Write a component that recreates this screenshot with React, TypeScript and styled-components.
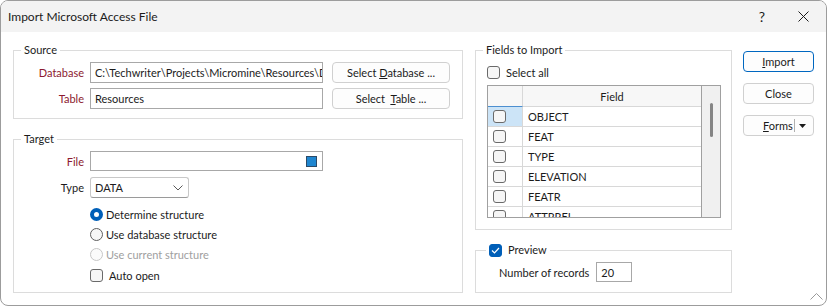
import React from 'react';
import styled, { createGlobalStyle } from 'styled-components';

const FONT = `Lato, "Liberation Sans", sans-serif`;

const fields = ['OBJECT', 'FEAT', 'TYPE', 'ELEVATION', 'FEATR', 'ATTRREL'];

const GlobalStyle = createGlobalStyle`
  html, body {
    margin: 0;
    padding: 0;
    background: #ffffff;
  }
  body {
    font-family: ${FONT};
    font-size: 11px;
    color: #1b1b1b;
  }
`;

function App() {
  return (
    <>
      <GlobalStyle />
      <Window>
        <TitleBar>
          <Title>Import Microsoft Access File</Title>
          <TitleActions>
            <HelpGlyph>?</HelpGlyph>
            <svg width="11" height="11" viewBox="0 0 11 11">
              <path d="M0.5 0.5 L10.5 10.5 M10.5 0.5 L0.5 10.5" stroke="#1b1b1b" strokeWidth="1" />
            </svg>
          </TitleActions>
        </TitleBar>

        <Body>
          <Column $width={450}>
            <Group>
              <Legend>Source</Legend>
              <Rows $gap={5} $bottom={9}>
                <FormRow>
                  <Label $required>Database</Label>
                  <TextBox $width={233}>C:\Techwriter\Projects\Micromine\Resources\Data</TextBox>
                  <Button $width={118}>
                    Select <u>D</u>atabase ...
                  </Button>
                </FormRow>
                <FormRow>
                  <Label $required>Table</Label>
                  <TextBox $width={233}>Resources</TextBox>
                  <Button $width={118}>
                    Select&nbsp; <u>T</u>able ...
                  </Button>
                </FormRow>
              </Rows>
            </Group>

            <Group $grow>
              <Legend>Target</Legend>
              <Rows $gap={6} $bottom={0}>
                <FormRow $height={20}>
                  <Label $required>File</Label>
                  <TextBox $width={233}>
                    <FileSwatch />
                  </TextBox>
                </FormRow>
                <FormRow>
                  <Label>Type</Label>
                  <Select>
                    DATA
                    <svg width="10" height="6" viewBox="0 0 10 6">
                      <path d="M0.5 0.5 L5 5 L9.5 0.5" fill="none" stroke="#5a5a5a" strokeWidth="1" />
                    </svg>
                  </Select>
                </FormRow>
                <OptionList>
                  <OptionRow>
                    <Radio $checked />
                    Determine structure
                  </OptionRow>
                  <OptionRow>
                    <Radio />
                    Use database structure
                  </OptionRow>
                  <OptionRow $disabled>
                    <Radio $disabled />
                    Use current structure
                  </OptionRow>
                  <OptionRow $gap={6} $top={1}>
                    <CheckBox />
                    Auto open
                  </OptionRow>
                </OptionList>
              </Rows>
            </Group>
          </Column>

          <Column $width={257}>
            <Group>
              <Legend>Fields to Import</Legend>
              <FieldsBody>
                <CheckRow>
                  <CheckBox />
                  Select all
                </CheckRow>
                <Grid>
                  <GridTable>
                    <GridHeader>
                      <HeaderCorner />
                      <HeaderCell>Field</HeaderCell>
                    </GridHeader>
                    {fields.map((name, i) => (
                      <GridRow key={name}>
                        <SelectCell $active={i === 0}>
                          <CheckBox />
                        </SelectCell>
                        <NameCell>{name}</NameCell>
                      </GridRow>
                    ))}
                  </GridTable>
                  <ScrollTrack>
                    <ScrollThumb />
                  </ScrollTrack>
                </Grid>
              </FieldsBody>
            </Group>

            <Group $grow>
              <Legend $offset={10}>
                <LegendCheck>
                  <CheckBox $checked>
                    <svg width="9" height="7" viewBox="0 0 9 7">
                      <path d="M1 3.5 L3.5 6 L8 1" fill="none" stroke="#ffffff" strokeWidth="1.2" />
                    </svg>
                  </CheckBox>
                  Preview
                </LegendCheck>
              </Legend>
              <PreviewRow>
                Number of records
                <TextBox $width={36} $height={20}>20</TextBox>
              </PreviewRow>
            </Group>
          </Column>

          <ButtonColumn>
            <Button $primary $height={21}>
              <u>I</u>mport
            </Button>
            <Button $height={21}>Close</Button>
            <SplitButton>
              <SplitLabel>
                <u>F</u>orms
              </SplitLabel>
              <SplitDivider />
              <svg width="7" height="4" viewBox="0 0 7 4">
                <path d="M0 0 L7 0 L3.5 4 Z" fill="#1b1b1b" />
              </svg>
            </SplitButton>
          </ButtonColumn>
        </Body>

        <SizeGrip>
          <svg width="13" height="8" viewBox="0 0 13 8">
            <path d="M0.5 7.5 L6.5 1.5 L12.5 7.5" fill="none" stroke="#9a9a9a" strokeWidth="1" />
          </svg>
        </SizeGrip>
      </Window>
    </>
  );
}

const Window = styled.div`
  position: relative;
  display: flex;
  flex-direction: column;
  box-sizing: border-box;
  width: 827px;
  height: 306px;
  border: 1px solid #9c9c9c;
  border-radius: 8px;
  overflow: hidden;
  background: #ffffff;
`;

const TitleBar = styled.div`
  display: flex;
  align-items: center;
  justify-content: space-between;
  height: 31px;
  padding: 0 17px 0 7px;
  background: #f3f3f3;
`;

const Title = styled.span`
  font-size: 12px;
`;

const TitleActions = styled.div`
  display: flex;
  align-items: center;
  gap: 33px;
`;

const HelpGlyph = styled.span`
  font-size: 14px;
`;

const Body = styled.div`
  display: flex;
  flex: 1;
  gap: 12px;
  padding: 10px 12px 12px 12px;
`;

const Column = styled.div<{ $width: number }>`
  display: flex;
  flex-direction: column;
  gap: 12px;
  width: ${(p) => p.$width}px;
  flex-shrink: 0;
`;

const Group = styled.fieldset<{ $grow?: boolean }>`
  flex: ${(p) => (p.$grow ? 1 : '0 0 auto')};
  box-sizing: border-box;
  min-width: 0;
  margin: 0;
  padding: 4px 0 0 0;
  border: 1px solid #dcdcdc;
`;

const Legend = styled.legend<{ $offset?: number }>`
  margin-left: ${(p) => p.$offset ?? 7}px;
  padding: 0 3px;
  line-height: 16px;
  height: 16px;
`;

const LegendCheck = styled.span`
  display: flex;
  align-items: center;
  gap: 6px;
  height: 16px;
`;

const Rows = styled.div<{ $gap: number; $bottom: number }>`
  display: flex;
  flex-direction: column;
  gap: ${(p) => p.$gap}px;
  padding-bottom: ${(p) => p.$bottom}px;
`;

const FormRow = styled.div<{ $height?: number }>`
  display: flex;
  align-items: center;
  gap: 6px;
  height: ${(p) => p.$height ?? 21}px;

  & > button {
    margin-left: 3px;
  }
`;

const Label = styled.span<{ $required?: boolean }>`
  width: 70px;
  text-align: right;
  color: ${(p) => (p.$required ? '#8c1a30' : '#1b1b1b')};
`;

const TextBox = styled.div<{ $width: number; $height?: number }>`
  position: relative;
  display: flex;
  align-items: center;
  box-sizing: border-box;
  width: ${(p) => p.$width}px;
  height: ${(p) => (p.$height ? `${p.$height}px` : '100%')};
  padding: 0 4px;
  border: 1px solid #a8a8a8;
  background: #ffffff;
  white-space: nowrap;
  overflow: hidden;
`;

const FileSwatch = styled.span`
  position: absolute;
  right: 5px;
  top: 4px;
  box-sizing: border-box;
  width: 11px;
  height: 11px;
  border: 1px solid #2b4a68;
  background: #1f86d0;
`;

const Select = styled.div`
  display: flex;
  align-items: center;
  justify-content: space-between;
  box-sizing: border-box;
  width: 99px;
  height: 21px;
  padding: 0 5px 0 4px;
  border: 1px solid #c8c8c8;
  border-bottom-color: #9a9a9a;
  border-radius: 3px;
  background: #ffffff;
`;

const OptionList = styled.div`
  display: flex;
  flex-direction: column;
  margin-left: 76px;
`;

const OptionRow = styled.div<{ $disabled?: boolean; $gap?: number; $top?: number }>`
  display: flex;
  align-items: center;
  gap: ${(p) => p.$gap ?? 3}px;
  height: 20px;
  margin-top: ${(p) => p.$top ?? 0}px;
  color: ${(p) => (p.$disabled ? '#a0a0a0' : '#1b1b1b')};
`;

const Radio = styled.span<{ $checked?: boolean; $disabled?: boolean }>`
  box-sizing: border-box;
  width: 13px;
  height: 13px;
  border-radius: 50%;
  border: ${(p) =>
    p.$checked ? '4px solid #005fb8' : `1px solid ${p.$disabled ? '#c6c6c6' : '#5f5f5f'}`};
  background: ${(p) => (p.$checked ? '#ffffff' : p.$disabled ? '#fbfbfb' : '#f6f6f6')};
`;

const CheckBox = styled.span<{ $checked?: boolean }>`
  display: flex;
  align-items: center;
  justify-content: center;
  box-sizing: border-box;
  width: 13px;
  height: 13px;
  border-radius: 3px;
  border: 1px solid ${(p) => (p.$checked ? '#005fb8' : '#6a6a6a')};
  background: ${(p) => (p.$checked ? '#005fb8' : '#f6f6f6')};
`;

const FieldsBody = styled.div`
  display: flex;
  flex-direction: column;
  gap: 5px;
  padding: 2px 10px 11px 11px;
`;

const CheckRow = styled.div`
  display: flex;
  align-items: center;
  gap: 6px;
  height: 16px;
`;

const Grid = styled.div`
  display: flex;
  box-sizing: border-box;
  height: 133px;
  border: 1px solid #a0a0a0;
  overflow: hidden;
`;

const GridTable = styled.div`
  display: flex;
  flex-direction: column;
  flex: 1;
  overflow: hidden;
`;

const GridHeader = styled.div`
  display: flex;
  flex-shrink: 0;
  height: 21px;
  background: #f7f7f7;
`;

const HeaderCorner = styled.div`
  box-sizing: border-box;
  width: 35px;
  border-right: 1px solid #d8d8d8;
  border-bottom: 1px solid #4c8fd0;
`;

const HeaderCell = styled.div`
  display: flex;
  align-items: center;
  justify-content: center;
  flex: 1;
  border-bottom: 1px solid #d8d8d8;
`;

const GridRow = styled.div`
  display: flex;
  flex-shrink: 0;
  height: 20px;
  box-sizing: border-box;
  border-bottom: 1px solid #d8d8d8;
`;

const SelectCell = styled.div<{ $active?: boolean }>`
  display: flex;
  align-items: center;
  box-sizing: border-box;
  width: 35px;
  padding-left: 5px;
  border-right: 1px solid #d8d8d8;
  background: ${(p) => (p.$active ? '#cce4f7' : '#ffffff')};
`;

const NameCell = styled.div`
  display: flex;
  align-items: center;
  flex: 1;
  padding-left: 5px;
`;

const ScrollTrack = styled.div`
  display: flex;
  justify-content: center;
  width: 18px;
  background: #f0f0f0;
  border-left: 1px solid #a0a0a0;
`;

const ScrollThumb = styled.div`
  width: 3px;
  height: 34px;
  margin-top: 17px;
  border-radius: 2px;
  background: #858585;
`;

const PreviewRow = styled.div`
  display: flex;
  align-items: center;
  gap: 7px;
  padding-left: 23px;
`;

const ButtonColumn = styled.div`
  display: flex;
  flex-direction: column;
  gap: 11px;
  width: 72px;
  margin-left: -1px;
  padding-top: 9px;
`;

const Button = styled.button<{ $primary?: boolean; $width?: number; $height?: number }>`
  box-sizing: border-box;
  width: ${(p) => (p.$width ? `${p.$width}px` : '100%')};
  height: ${(p) => (p.$height ? `${p.$height}px` : '100%')};
  padding: 0;
  border: 1px solid ${(p) => (p.$primary ? '#0067c0' : '#d0d0d0')};
  border-radius: 4px;
  background: #fdfdfd;
  font-family: ${FONT};
  font-size: 11px;
  color: #1b1b1b;
`;

const SplitButton = styled.div`
  display: flex;
  align-items: center;
  box-sizing: border-box;
  height: 21px;
  padding: 0 7px 0 19px;
  border: 1px solid #d0d0d0;
  border-radius: 4px;
  background: #fdfdfd;
`;

const SplitLabel = styled.span`
  flex: 1;
`;

const SplitDivider = styled.span`
  width: 1px;
  height: 13px;
  margin-right: 4px;
  background: #b0b0b0;
`;

const SizeGrip = styled.div`
  position: absolute;
  right: 3px;
  bottom: 5px;
  line-height: 0;
`;

export default App;
